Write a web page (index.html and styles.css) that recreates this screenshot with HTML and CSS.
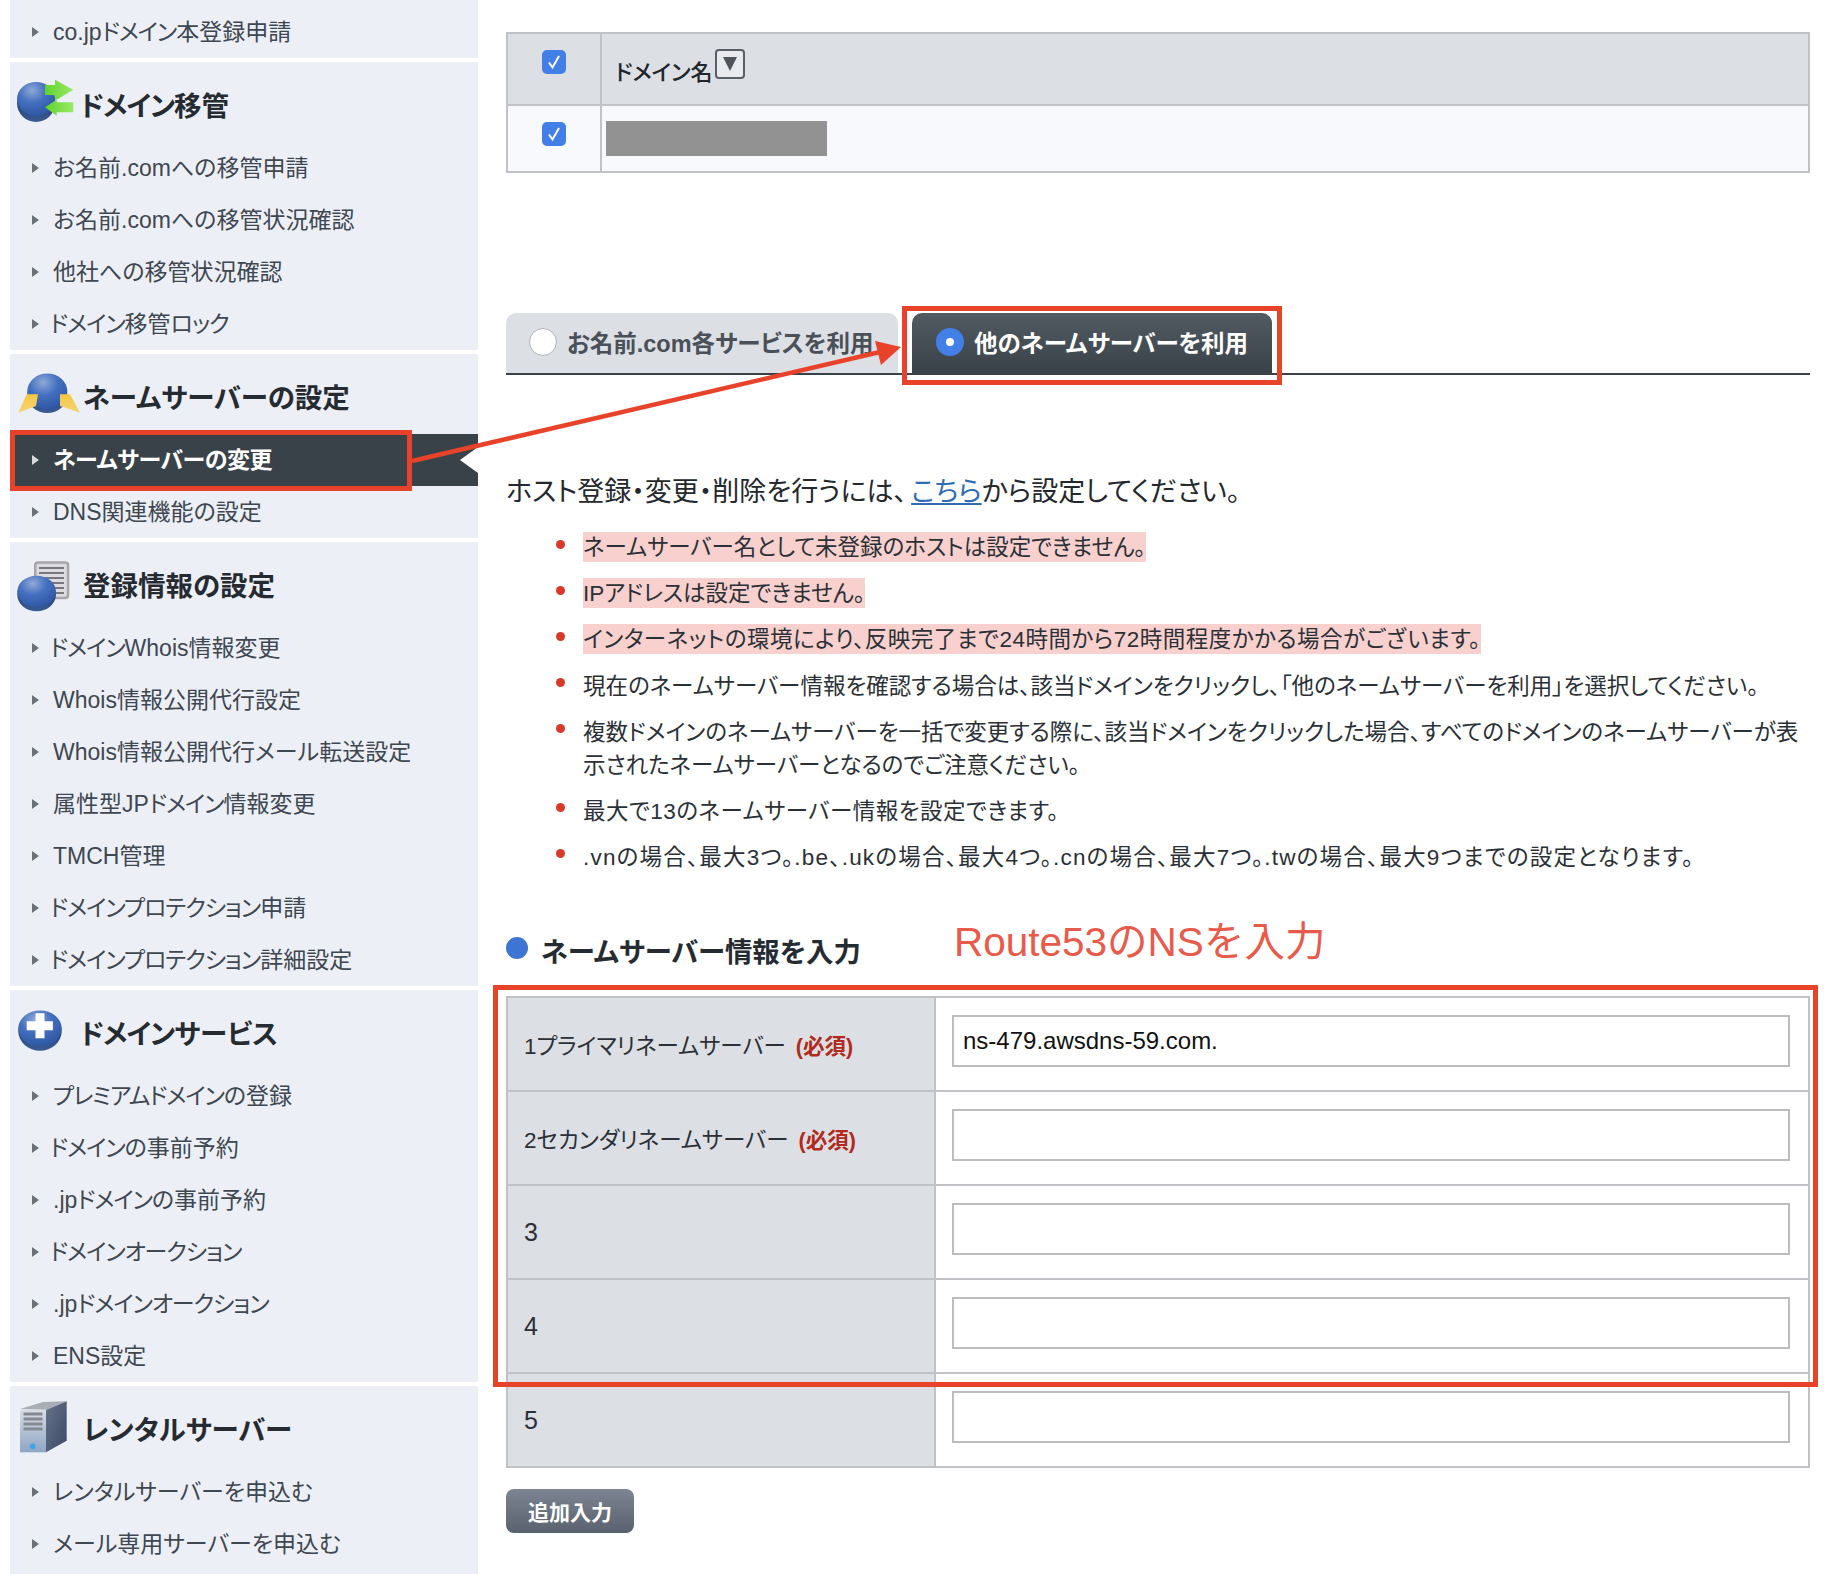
FILE: index.html
```html
<!DOCTYPE html>
<html lang="ja">
<head>
  <meta charset="UTF-8" />
  <title>ネームサーバーの変更</title>
  <link rel="stylesheet" href="styles.css">
</head>
<body>
<div class="page">

  <aside class="sidebar">
    <svg class="svg-defs" aria-hidden="true">
      <defs>
        <radialGradient id="discTop" cx="0.4" cy="0.25" r="0.8">
          <stop offset="0" stop-color="#8fa8d6"/>
          <stop offset="0.45" stop-color="#4470c0"/>
          <stop offset="1" stop-color="#2c549f"/>
        </radialGradient>
        <linearGradient id="discRim" x1="0" y1="0" x2="0" y2="1">
          <stop offset="0" stop-color="#14264a"/>
          <stop offset="1" stop-color="#3b5c94"/>
        </linearGradient>
        <linearGradient id="greenArrow" x1="0" y1="0" x2="1" y2="0">
          <stop offset="0" stop-color="#5ed42c"/>
          <stop offset="1" stop-color="#9be86a"/>
        </linearGradient>
        <linearGradient id="yellowArrow" x1="0" y1="0" x2="0" y2="1">
          <stop offset="0" stop-color="#f7c83e"/>
          <stop offset="1" stop-color="#f2d477"/>
        </linearGradient>
        <linearGradient id="serverFront" x1="0" y1="0" x2="0" y2="1">
          <stop offset="0" stop-color="#d9dde4"/>
          <stop offset="1" stop-color="#8ea5c4"/>
        </linearGradient>
        <linearGradient id="serverSide" x1="0" y1="0" x2="1" y2="1">
          <stop offset="0" stop-color="#667288"/>
          <stop offset="1" stop-color="#3c4a66"/>
        </linearGradient>
        <filter id="soft"><feGaussianBlur stdDeviation="0.5"/></filter>
      </defs>
    </svg>

    <section class="nav-group nav-group-first">
      <ul class="nav-list">
        <li><span>co.jp<span class="tight">ドメイン</span>本登録申請</span></li>
      </ul>
    </section>

    <section class="nav-group">
      <h3 class="nav-title">
        <svg class="nav-icon" viewBox="0 0 66 56">
          <g filter="url(#soft)">
            <ellipse cx="20" cy="27" rx="19" ry="19" fill="url(#discRim)"/>
            <ellipse cx="20" cy="23" rx="19" ry="17" fill="url(#discTop)"/>
            <polygon points="29,9 39,9 39,3.7 57.3,13.7 39,24.7 39,19 29,19" fill="url(#greenArrow)"/>
            <polygon points="29,31.3 40.7,23.7 40.7,26.3 57.3,26.3 57.3,36.3 40.7,36.3 40.7,39.7" fill="url(#greenArrow)"/>
          </g>
        </svg>
        <span class="lead"><span class="tight">ドメイン</span>移管</span>
      </h3>
      <ul class="nav-list">
        <li><span>お名前.comへの移管申請</span></li>
        <li><span>お名前.comへの移管状況確認</span></li>
        <li><span>他社への移管状況確認</span></li>
        <li><span class="lead"><span class="tight">ドメイン</span>移管<span class="tight">ロック</span></span></li>
      </ul>
    </section>

    <section class="nav-group">
      <h3 class="nav-title">
        <svg class="nav-icon" viewBox="0 0 66 56">
          <g filter="url(#soft)">
            <ellipse cx="31.3" cy="27" rx="20" ry="18" fill="url(#discRim)"/>
            <ellipse cx="31.3" cy="23.5" rx="20" ry="18" fill="url(#discTop)"/>
            <polygon points="2.3,44.7 10.7,26.3 22,26.3 20,38" fill="url(#yellowArrow)"/>
            <polygon points="64,44.7 54,26.3 44,26.3 44,38" fill="url(#yellowArrow)"/>
          </g>
        </svg>
        <span>ネームサーバーの設定</span>
      </h3>
      <ul class="nav-list">
        <li class="active"><span>ネームサーバーの変更</span></li>
        <li><span>DNS関連機能の設定</span></li>
      </ul>
    </section>

    <section class="nav-group">
      <h3 class="nav-title">
        <svg class="nav-icon" viewBox="0 0 66 56">
          <g filter="url(#soft)">
            <rect x="18" y="5.3" width="35.3" height="38" rx="4" fill="#a9a6ab"/>
            <rect x="20.5" y="7.8" width="30.3" height="33" rx="2" fill="#dcdce0"/>
            <path d="M23 12h25M23 17h25M23 22h25M23 27h25M23 32h25M23 37h25" stroke="#77777d" stroke-width="2"/>
            <ellipse cx="20.6" cy="38.5" rx="19.3" ry="16.8" fill="url(#discRim)"/>
            <ellipse cx="20.6" cy="35.5" rx="19.3" ry="15.8" fill="url(#discTop)"/>
          </g>
        </svg>
        <span>登録情報の設定</span>
      </h3>
      <ul class="nav-list">
        <li><span class="lead"><span class="tight">ドメイン</span>Whois情報変更</span></li>
        <li><span>Whois情報公開代行設定</span></li>
        <li><span>Whois情報公開代行メール転送設定</span></li>
        <li><span>属性型JP<span class="tight">ドメイン</span>情報変更</span></li>
        <li><span>TMCH管理</span></li>
        <li><span class="lead"><span class="tight">ドメインプロテクション</span>申請</span></li>
        <li><span class="lead"><span class="tight">ドメインプロテクション</span>詳細設定</span></li>
      </ul>
    </section>

    <section class="nav-group">
      <h3 class="nav-title">
        <svg class="nav-icon" viewBox="0 0 66 56">
          <g filter="url(#soft)">
            <ellipse cx="24" cy="27" rx="21.7" ry="19.7" fill="url(#discRim)"/>
            <ellipse cx="24" cy="24.5" rx="21.7" ry="18" fill="url(#discTop)"/>
            <path d="M19.5 9.2h9v8h8.400v9h-8.400v8h-9v-8h-8.800v-9h8.800z" fill="#fff"/>
          </g>
        </svg>
        <span class="lead"><span class="tight">ドメイン</span>サービス</span>
      </h3>
      <ul class="nav-list">
        <li><span><span class="tight">プレミアムドメイン</span>の登録</span></li>
        <li><span class="lead"><span class="tight">ドメイン</span>の事前予約</span></li>
        <li><span>.jp<span class="tight">ドメイン</span>の事前予約</span></li>
        <li><span class="lead"><span class="tight">ドメインオークション</span></span></li>
        <li><span>.jp<span class="tight">ドメインオークション</span></span></li>
        <li><span>ENS設定</span></li>
      </ul>
    </section>

    <section class="nav-group">
      <h3 class="nav-title">
        <svg class="nav-icon" viewBox="0 0 66 56">
          <g filter="url(#soft)">
            <polygon points="4,9 27,2 50.700,1.300 30,10" fill="#a8adb6"/>
            <polygon points="30,10 50.700,1.300 50.700,40.700 30,52.300" fill="url(#serverSide)"/>
            <rect x="4" y="9.500" width="26" height="42.800" fill="url(#serverFront)"/>
            <path d="M7.500 14h19M7.500 19h19M7.500 24h19M7.500 29h19" stroke="#858a92" stroke-width="3"/>
            <circle cx="16.700" cy="46.300" r="2.800" fill="#3aa4ea"/>
          </g>
        </svg>
        <span>レンタルサーバー</span>
      </h3>
      <ul class="nav-list">
        <li><span>レンタルサーバーを申込む</span></li>
        <li><span>メール専用サーバーを申込む</span></li>
      </ul>
    </section>
  </aside>

  <main class="content">
    <table class="domain-table">
      <tr class="head-row">
        <td class="check-cell"><span class="checkbox"><svg viewBox="0 0 24 24"><path d="M7 12.500l3.500 5L17 6" fill="none" stroke="#fff" stroke-width="2"/></svg></span></td>
        <td class="name-cell">ドメイン名<span class="sort-btn"></span></td>
      </tr>
      <tr class="body-row">
        <td class="check-cell"><span class="checkbox"><svg viewBox="0 0 24 24"><path d="M7 12.500l3.500 5L17 6" fill="none" stroke="#fff" stroke-width="2"/></svg></span></td>
        <td class="masked-cell"><div class="masked"></div></td>
      </tr>
    </table>

    <div class="tabs">
      <div class="tab tab-off"><span class="radio"></span>お名前.com各サービスを利用</div>
      <div class="tab tab-on"><span class="radio radio-on"></span>他のネームサーバーを利用</div>
    </div>

    <p class="host-note">ホスト登録・変更・削除を行うには、<a href="#">こちら</a>から設定してください。</p>

    <ul class="notes">
      <li><span class="hl">ネームサーバー名として未登録のホストは設定できません。</span></li>
      <li><span class="hl">IPアドレスは設定できません。</span></li>
      <li class="loose"><span class="hl">インターネットの環境により、反映完了まで24時間から72時間程度かかる場合がございます。</span></li>
      <li><span>現在のネームサーバー情報を確認する場合は、該当ドメインをクリックし、「他のネームサーバーを利用」を選択してください。</span></li>
      <li><span>複数ドメインのネームサーバーを一括で変更する際に、該当ドメインをクリックした場合、すべてのドメインのネームサーバーが表<br>示されたネームサーバーとなるのでご注意ください。</span></li>
      <li class="loose"><span>最大で13のネームサーバー情報を設定できます。</span></li>
      <li class="looser"><span>.vnの場合、最大3つ。.be、.ukの場合、最大4つ。.cnの場合、最大7つ。.twの場合、最大9つまでの設定となります。</span></li>
    </ul>

    <h3 class="section-title"><span class="section-dot"></span>ネームサーバー情報を入力</h3>

    <table class="ns-table">
      <tr>
        <th>1プライマリネームサーバー<span class="required">(必須)</span></th>
        <td><input type="text" value="ns-479.awsdns-59.com."></td>
      </tr>
      <tr>
        <th>2セカンダリネームサーバー<span class="required">(必須)</span></th>
        <td><input type="text"></td>
      </tr>
      <tr>
        <th class="num">3</th>
        <td><input type="text"></td>
      </tr>
      <tr>
        <th class="num">4</th>
        <td><input type="text"></td>
      </tr>
      <tr>
        <th class="num">5</th>
        <td><input type="text"></td>
      </tr>
    </table>

    <button class="add-btn" type="button">追加入力</button>
  </main>

  <!-- annotations drawn over the screenshot -->
  <div class="mark mark-nav"></div>
  <div class="mark mark-tab"></div>
  <div class="mark mark-form"></div>
  <div class="mark-text">Route53のNSを入力</div>
  <svg class="mark-arrow" viewBox="0 0 1832 1574">
    <line x1="412" y1="461" x2="880" y2="352" stroke="#e8432a" stroke-width="4.500"/>
    <polygon points="901,347 875,341 881,365" fill="#e8432a"/>
  </svg>
</div>
</body>
</html>
```

FILE: styles.css
```css
* {
  box-sizing: border-box;
}

body {
  margin: 0;
  background: #fff;
  font-family: "Liberation Sans", "Noto Sans CJK JP", sans-serif;
  font-feature-settings: "palt";
  color: #2b3036;
}

.page {
  position: relative;
  display: flex;
  width: 1832px;
  height: 1574px;
  overflow: hidden;
}

/* sidebar */
.sidebar {
  width: 468px;
  margin-left: 10px;
  flex-shrink: 0;
}

.svg-defs {
  display: block;
  width: 0;
  height: 0;
}

.nav-group {
  background: #ecf0f6;
  margin-bottom: 4px;
}

.nav-group-first {
  padding-top: 6px;
}

.nav-group:last-child {
  padding-bottom: 4px;
}

.nav-title {
  display: flex;
  align-items: center;
  height: 80px;
  margin: 0;
  padding: 4px 0 0 6px;
  font-size: 27.5px;
  font-weight: 700;
  color: #262b31;
}

.nav-icon {
  width: 66px;
  height: 56px;
  margin-right: 1px;
  flex-shrink: 0;
}

.nav-list {
  list-style: none;
  margin: 0;
  padding: 0;
}

.nav-list li {
  display: flex;
  align-items: center;
  height: 52px;
  padding-left: 22px;
  padding-bottom: 5px;
  font-size: 23px;
  color: #3f4751;
  white-space: nowrap;
}

.nav-list li::before {
  content: "";
  width: 0;
  height: 0;
  margin: 4px 14px 0 0;
  border-left: 7px solid #6b7178;
  border-top: 5px solid transparent;
  border-bottom: 5px solid transparent;
}

.tight {
  letter-spacing: -1.1px;
}

.lead {
  margin-left: -3px;
}

.nav-list li.active {
  position: relative;
  background: #3a4249;
  color: #fff;
  font-weight: 700;
  letter-spacing: -0.4px;
}

.nav-list li.active::before {
  border-left-color: #d8dade;
}

.nav-list li.active::after {
  content: "";
  position: absolute;
  right: 0;
  top: 13px;
  border-right: 18px solid #fff;
  border-top: 13px solid transparent;
  border-bottom: 13px solid transparent;
}

/* main column */
.content {
  width: 1304px;
  margin-left: 28px;
  padding-top: 32px;
  flex-shrink: 0;
}

.domain-table,
.ns-table {
  width: 100%;
  border-collapse: collapse;
  table-layout: fixed;
}

.domain-table td {
  border: 2px solid #c0c2c6;
  padding: 0;
}

.head-row {
  height: 72px;
  background: #dcdfe4;
}

.body-row {
  height: 67px;
  background: #f8f9fc;
}

.check-cell {
  width: 94px;
  text-align: center;
}

.checkbox {
  display: block;
  width: 24px;
  height: 24px;
  margin: -14px auto 0;
  border-radius: 5px;
  background: #4280e8;
}

.body-row .checkbox {
  margin-top: -9px;
}

.checkbox svg {
  display: block;
}

.domain-table .name-cell {
  padding: 5px 0 0 13px;
  font-size: 22px;
  font-weight: 500;
  color: #22262b;
}

.sort-btn {
  display: inline-block;
  position: relative;
  top: -10px;
  width: 30px;
  height: 30px;
  margin-left: 2px;
  vertical-align: middle;
  border: 2px solid #5a5f66;
  border-radius: 4px;
  background: #e8eaee;
}

.sort-btn::after {
  content: "";
  display: block;
  width: 0;
  margin: 6px auto 0;
  border-top: 14px solid #50555c;
  border-left: 7px solid transparent;
  border-right: 7px solid transparent;
}

.domain-table .masked-cell {
  padding: 0 0 0 4px;
}

.masked {
  width: 221px;
  height: 35px;
  background: #929292;
}

/* tabs */
.tabs {
  display: flex;
  gap: 14px;
  height: 62px;
  margin-top: 140px;
  border-bottom: 2px solid #3a4249;
}

.tab {
  display: flex;
  align-items: center;
  height: 60px;
  padding-bottom: 2px;
  border-radius: 10px 10px 0 0;
  font-size: 23.500px;
  font-weight: 700;
}

.tab-off {
  width: 392px;
  padding-left: 23px;
  background: #dcdfe4;
  color: #4a5058;
}

.tab-on {
  width: 360px;
  padding-left: 24px;
  background: linear-gradient(#525a62, #3a4249);
  color: #fff;
}

.radio {
  width: 28px;
  height: 28px;
  margin-right: 10px;
  border: 1px solid #b0b2b6;
  border-radius: 50%;
  background: #fff;
  flex-shrink: 0;
}

.radio-on {
  border: 10px solid #4280e8;
}

/* notes */
.host-note {
  margin: 99px 0 22px;
  font-size: 27px;
  line-height: 36px;
  color: #24282d;
}

.host-note a {
  margin-left: 4px;
  color: #2f6db5;
}

.notes {
  list-style: none;
  margin: 0;
  padding: 0;
}

.notes li {
  display: flex;
  min-height: 33px;
  margin-bottom: 13px;
  font-size: 22.500px;
  line-height: 33px;
  color: #2b3036;
  white-space: nowrap;
}

.notes li.loose {
  letter-spacing: 0.5px;
}

.notes li.looser {
  letter-spacing: 1.2px;
}

.notes li::before {
  content: "";
  width: 9px;
  height: 9px;
  margin: 8px 18px 0 50px;
  border-radius: 50%;
  background: #d8392b;
  flex-shrink: 0;
}

.hl {
  display: inline-block;
  height: 30px;
  line-height: 32px;
  background: #f8d0ce;
}

.section-title {
  display: flex;
  align-items: center;
  height: 36px;
  margin: 58px 0 28px;
  font-size: 27.400px;
  font-weight: 700;
  color: #262b31;
}

.section-dot {
  width: 22px;
  height: 22px;
  margin-right: 13px;
  margin-bottom: 4px;
  border-radius: 50%;
  background: #3f75d2;
}

/* name server form */
.ns-table tr {
  height: 94px;
}

.ns-table th,
.ns-table td {
  border: 2px solid #c0c2c6;
  padding: 0;
}

.ns-table th {
  width: 428px;
  padding-left: 16px;
  background: #dcdfe4;
  font-size: 22.500px;
  font-weight: 400;
  text-align: left;
  color: #2b3036;
}

.ns-table th.num {
  font-size: 25px;
}

.ns-table td {
  padding: 0 18px 6px 16px;
  background: #fff;
}

.ns-table input {
  display: block;
  width: 838px;
  height: 52px;
  padding: 0 9px;
  border: 2px solid #bcbcbc;
  background: #fff;
  font-family: "Liberation Sans", sans-serif;
  font-size: 24px;
  color: #111;
}

.required {
  margin-left: 10px;
  font-size: 21.500px;
  font-weight: 700;
  color: #b02a20;
}

.add-btn {
  display: block;
  width: 128px;
  height: 44px;
  margin-top: 21px;
  border: none;
  border-radius: 8px;
  background: linear-gradient(#7d8492, #5a616e);
  font-family: inherit;
  font-feature-settings: inherit;
  font-size: 21px;
  font-weight: 700;
  color: #fff;
}

/* red annotations */
.mark {
  position: absolute;
  border: 5px solid #e8432a;
}

.mark-nav {
  left: 10px;
  top: 430px;
  width: 402px;
  height: 61px;
}

.mark-tab {
  left: 902px;
  top: 306px;
  width: 380px;
  height: 79px;
}

.mark-form {
  left: 493px;
  top: 985px;
  width: 1325px;
  height: 402px;
}

.mark-text {
  position: absolute;
  left: 954px;
  top: 918px;
  font-size: 40.500px;
  font-feature-settings: normal;
  line-height: 48px;
  color: #e85a4a;
  white-space: nowrap;
}

.mark-arrow {
  position: absolute;
  left: 0;
  top: 0;
  width: 1832px;
  height: 1574px;
}
```
